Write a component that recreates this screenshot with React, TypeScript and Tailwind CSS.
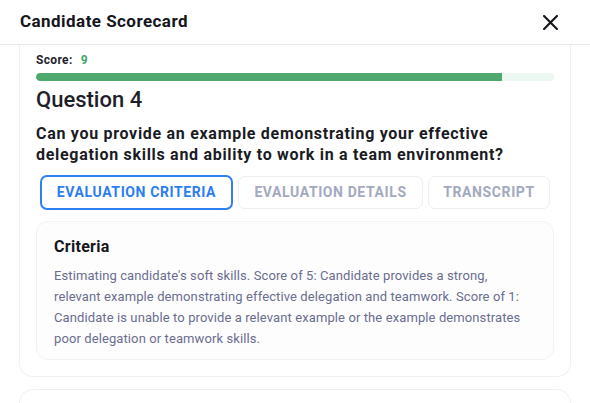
import React from "react";

export default function App() {
  const score = 9;
  const pct = (score / 10) * 100;
  return (
    <div
      className="w-[590px] h-[403px] overflow-hidden bg-white text-[#1b1b24]"
      style={{ fontFamily: "Roboto, 'Liberation Sans', sans-serif" }}
    >
      <div className="h-[45px] border-b border-[#e6e7ea] flex items-center justify-between pl-5 pr-[32px]">
        <h1 className="text-[17px] font-bold tracking-[0.45px] text-[#15151c]">Candidate Scorecard</h1>
        <svg width="15" height="15" viewBox="0 0 14 14" fill="none" stroke="#15151c" strokeWidth="2" strokeLinecap="round">
          <path d="M1 1L13 13M13 1L1 13" />
        </svg>
      </div>
      <div className="px-[19px]">
        <div className="border border-t-0 border-[#eff0f5] rounded-b-[14px] px-4 pt-[7px] pb-[16px]">
          <div className="text-[12px] leading-4 font-bold tracking-[0.35px] text-[#1f1f2b]">
            Score:<span className="ml-[8px] text-[#3fa66b]">{score}</span>
          </div>
          <div className="mt-[5px] h-2 rounded-full bg-[#eaf8f1] overflow-hidden">
            <div className="h-full rounded-l-full bg-[#4fa96f]" style={{ width: `${pct}%` }} />
          </div>
          <h2 className="mt-[5px] text-[22px] leading-7 font-medium text-[#1f1f27]">Question 4</h2>
          <p className="mt-[9px] text-[16px] leading-[21px] font-bold tracking-[0.7px] text-[#1b1b24]">
            Can you provide an example demonstrating your effective delegation skills and ability to work in a team environment?
          </p>
          <div className="mt-[11px] flex gap-[5px] pl-[4px]">
            <button className="w-[193px] h-[35px] -mt-[1px] rounded-[7px] border-2 border-[#2f7ff0] text-[#2b7ef0] text-[14px] font-bold tracking-[0.6px] flex items-center justify-center">
              EVALUATION CRITERIA
            </button>
            <button className="w-[185px] h-[33px] rounded-[7px] border border-[#eceef4] text-[#a3a9bf] text-[14px] font-bold tracking-[0.6px] flex items-center justify-center">
              EVALUATION DETAILS
            </button>
            <button className="w-[122px] h-[33px] rounded-[7px] border border-[#eceef4] text-[#a3a9bf] text-[14px] font-bold tracking-[0.6px] flex items-center justify-center">
              TRANSCRIPT
            </button>
          </div>
          <div className="mt-[11px] rounded-[12px] border border-[#f1f2f7] bg-[#fdfdfe] pl-[17px] pr-[28px] pt-[13px] pb-[10px]">
            <h3 className="text-[16px] leading-6 font-bold tracking-[0.3px] text-[#15151c]">Criteria</h3>
            <p className="mt-[6px] text-[13px] leading-[21px] tracking-[0.1px] text-[#6a6d8e]">
              Estimating candidate's soft skills. Score of 5: Candidate provides a strong, relevant example demonstrating effective delegation and teamwork. Score of 1: Candidate is unable to provide a relevant example or the example demonstrates poor delegation or teamwork skills.
            </p>
          </div>
        </div>
        <div className="mt-[12px] h-[40px] border border-[#eff0f5] rounded-t-[14px]" />
      </div>
    </div>
  );
}
